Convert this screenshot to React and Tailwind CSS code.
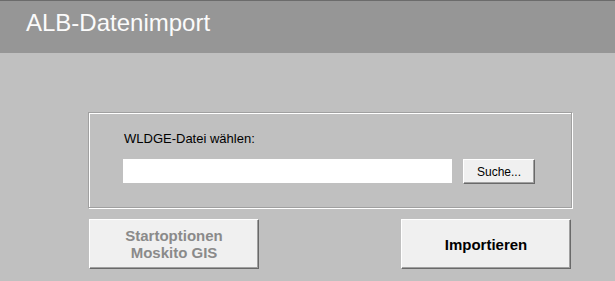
import React from "react";

const font = { fontFamily: '"Liberation Sans", Arial, sans-serif' };

function Btn3D({ className = "", children }) {
  return (
    <div
      className={
        "flex items-center justify-center text-center bg-[#f0f0f0] border border-t-white border-l-white border-r-[#696969] border-b-[#696969] shadow-[inset_-1px_-1px_0_#a0a0a0] " +
        className
      }
    >
      {children}
    </div>
  );
}

export default function App() {
  return (
    <div className="w-[615px] h-[281px] bg-[#c0c0c0] flex flex-col overflow-hidden" style={font}>
      <div className="h-[53px] bg-[#969696] border-t border-[#6b6b6b] pl-[26px] pt-[10px]">
        <div className="text-[24px] leading-none text-[#fbfbfb]">ALB-Datenimport</div>
      </div>
      <div className="ml-[88px] mt-[59px] w-[485px] flex flex-col">
        <div className="w-[484px] h-[96px] border border-[#a0a0a0] shadow-[inset_1px_1px_0_#fff,1px_1px_0_#fff] pl-[34px] pt-[18px] flex flex-col">
          <div className="text-[13px] leading-[15px] text-black pl-[1px]">WLDGE-Datei wählen:</div>
          <div className="mt-[13px] flex items-start gap-[11px]">
            <div className="w-[329px] h-[24px] bg-white" />
            <Btn3D className="w-[72px] h-[25px] text-[12px] leading-none text-black">Suche...</Btn3D>
          </div>
        </div>
        <div className="mt-[11px] flex justify-between pl-[1px] pr-[2px]">
          <Btn3D className="w-[170px] h-[50px] text-[15px] leading-[17px] font-bold text-[#8a8a8a]">
            <span>
              Startoptionen
              <br />
              Moskito GIS
            </span>
          </Btn3D>
          <Btn3D className="w-[170px] h-[50px] text-[15px] leading-[17px] font-bold text-black">
            Importieren
          </Btn3D>
        </div>
      </div>
    </div>
  );
}
